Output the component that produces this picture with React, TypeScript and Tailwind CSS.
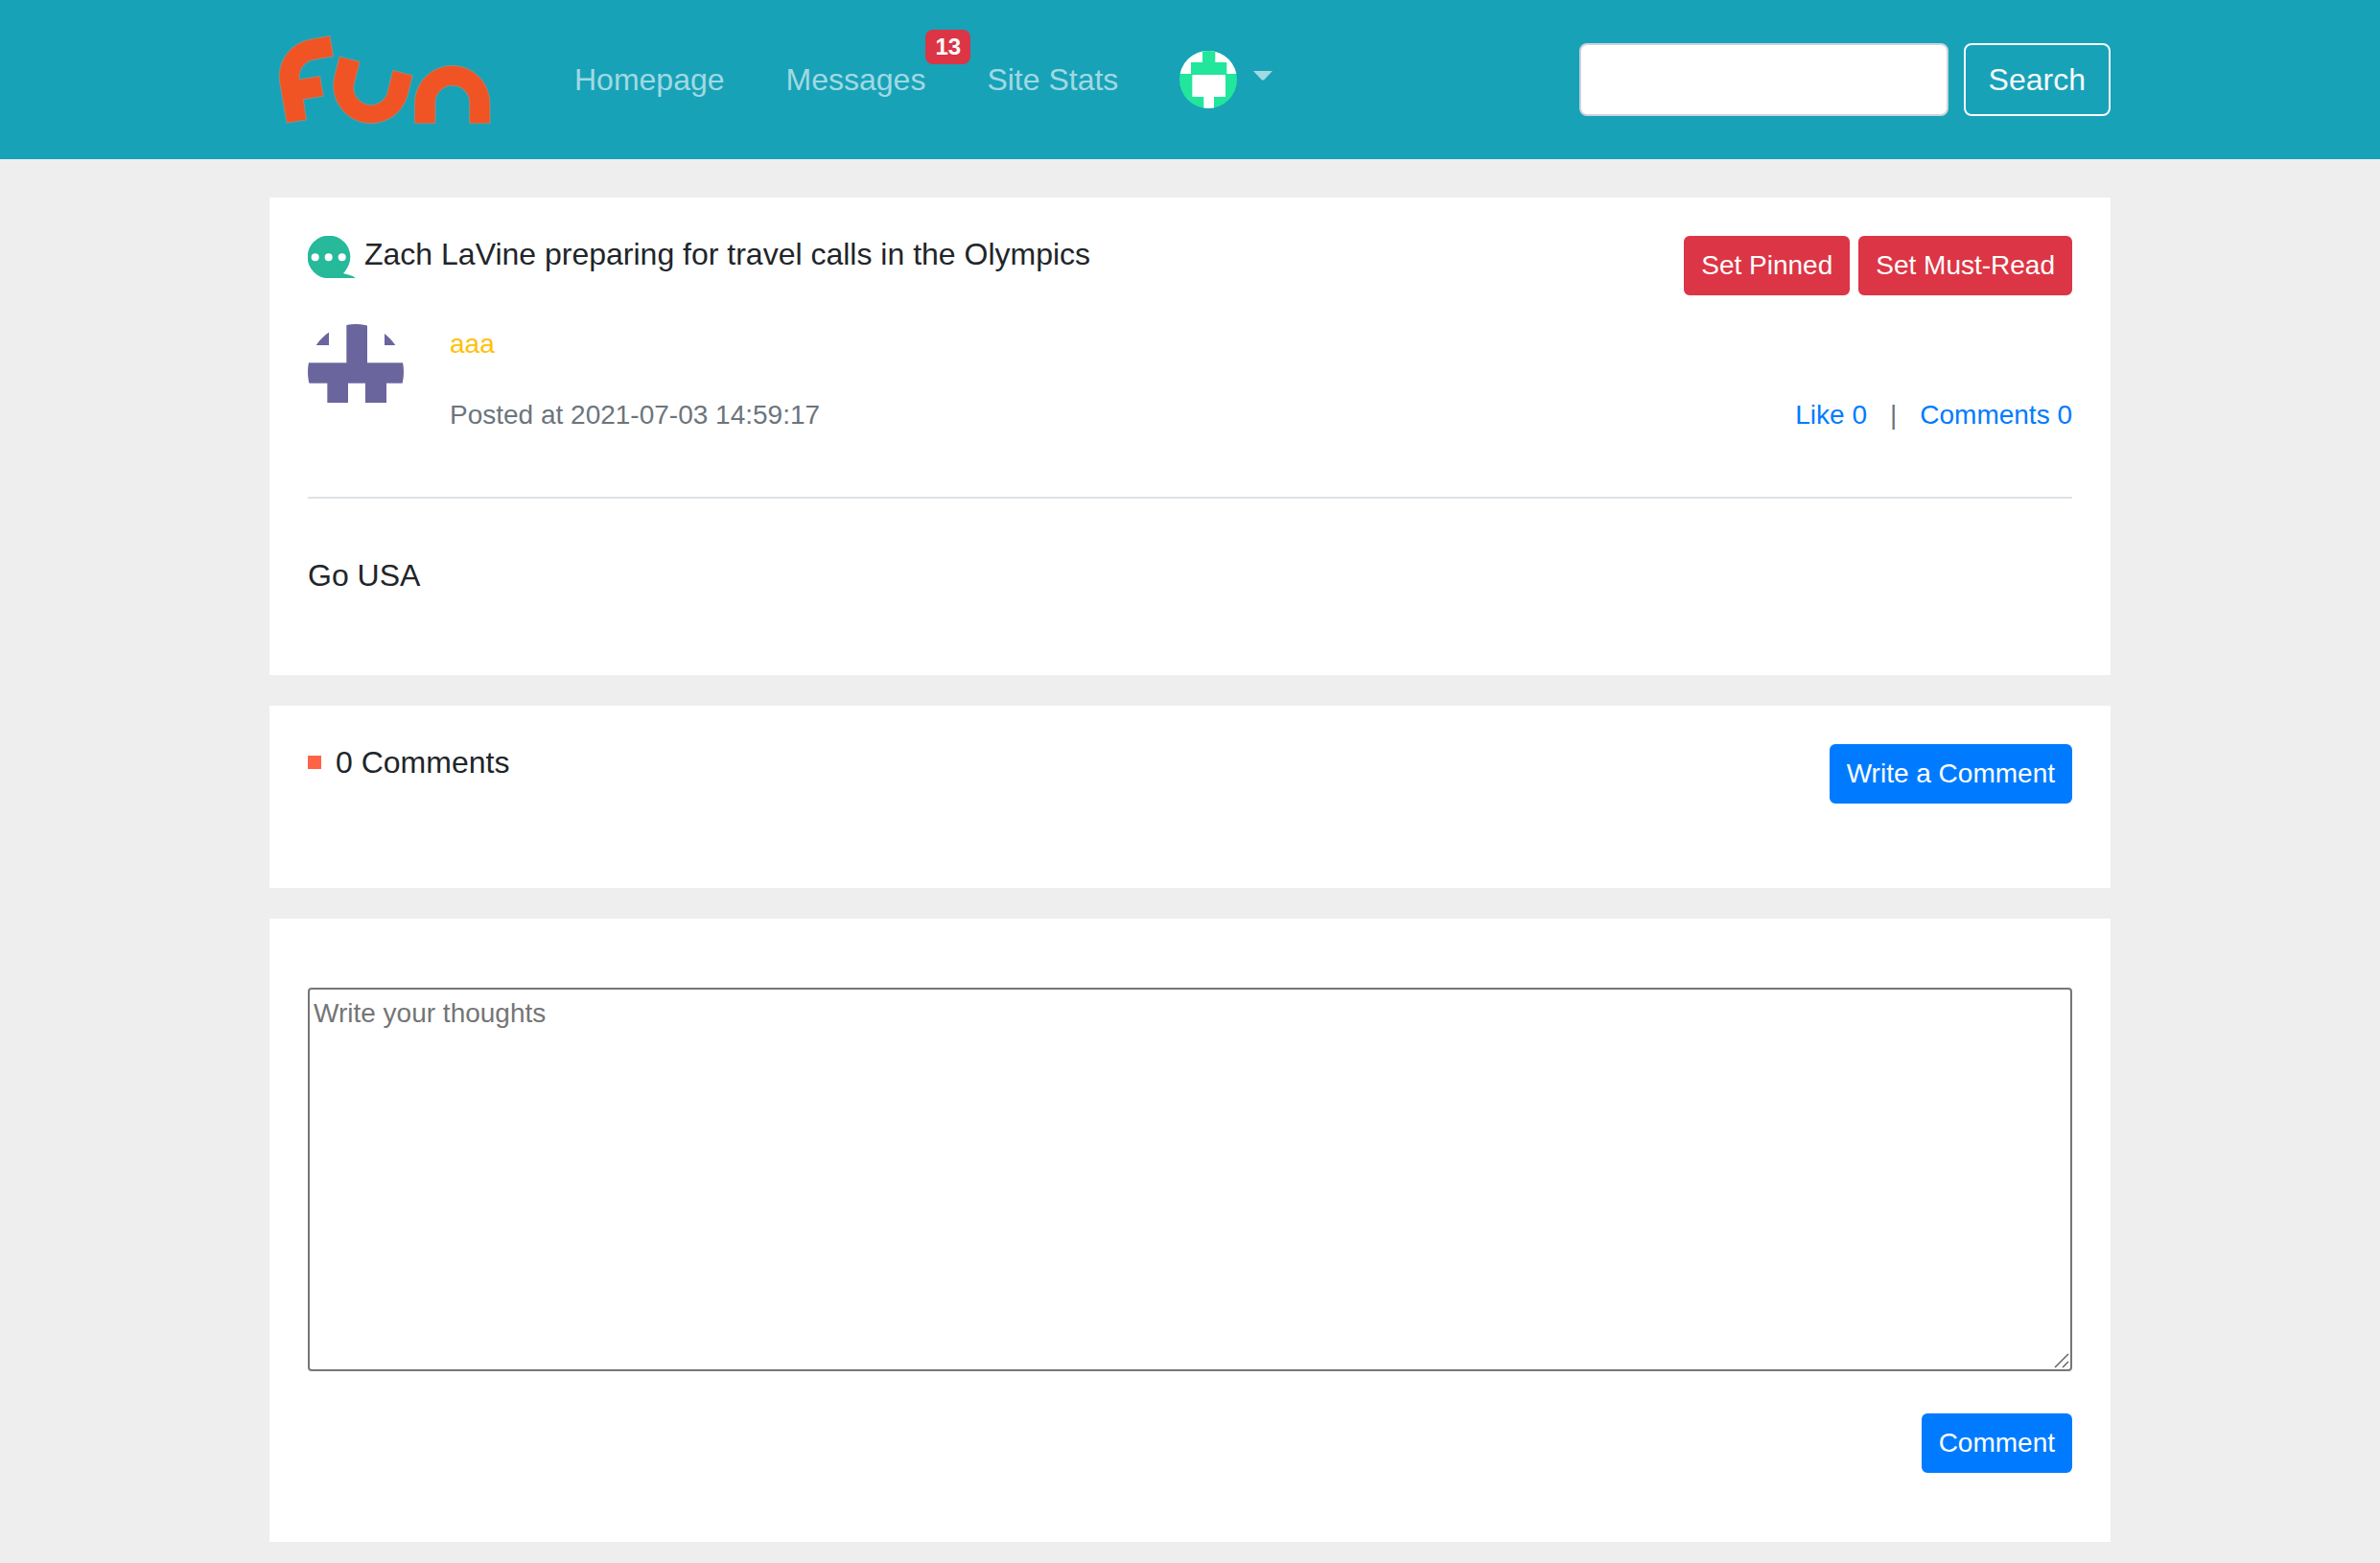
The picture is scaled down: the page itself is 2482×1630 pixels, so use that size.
import React from 'react';

function Logo() {
  return (
    <svg viewBox="33 96 768 306" className="h-[102px] w-[256px]" aria-hidden="true">
      <g fill="#f15424" stroke="#8e9a8c" strokeWidth="2">
        <path d="M222 112 L233 176 L172 187 A54 54 0 0 0 127 248 L191 238 L202 301 L139 311 L149 375 L87 385 L65 258 A118 118 0 0 1 160 123 Z" />
        <path d="M252 177 L316 193 L300 255 A54 54 0 1 0 404 281 L419 220 L481 236 L466 296 A118 118 0 0 1 236 240 Z" />
        <path d="M487 386 V323 A118 118 0 0 1 723 323 V386 H659 V321 A53 53 0 0 0 552 321 V386 Z" />
      </g>
    </svg>
  );
}

function UserAvatar() {
  return (
    <svg viewBox="0 0 180 180" className="size-[60px] rounded-full" aria-hidden="true">
      <rect width="180" height="180" fill="#21e69c" />
      <rect width="180" height="72" fill="#fff" />
      <rect x="72" width="40" height="40" fill="#21e69c" />
      <rect x="36" y="36" width="112" height="39" fill="#21e69c" />
      <rect x="40" y="75" width="104" height="69" fill="#fff" />
      <rect x="76" y="143" width="32" height="37" fill="#fff" />
    </svg>
  );
}

function AuthorAvatar() {
  return (
    <svg viewBox="0 0 300 300" className="size-[100px] shrink-0 rounded-full" fill="#6a659d" aria-hidden="true">
      <rect width="66" height="66" />
      <rect x="240" width="60" height="66" />
      <rect x="121" width="65" height="125" />
      <rect y="121" width="300" height="64" />
      <rect x="61" y="180" width="65" height="66" />
      <rect x="180" y="180" width="66" height="66" />
    </svg>
  );
}

function ChatIcon() {
  return (
    <svg viewBox="0 0 147 132" className="h-[44px] w-[49px] shrink-0" aria-hidden="true">
      <circle cx="66" cy="66" r="67" fill="#26b99a" />
      <path d="M120 106 Q114 114 111 117 Q120 120 130 122 Q142 126 147 130 V132 H66 Z" fill="#26b99a" />
      <circle cx="23" cy="67" r="12" fill="#fff" />
      <circle cx="65" cy="67" r="12" fill="#fff" />
      <circle cx="107" cy="67" r="12" fill="#fff" />
    </svg>
  );
}

function SmallButton({ tone, children }: { tone: 'danger' | 'primary'; children: React.ReactNode }) {
  const color = tone === 'danger' ? 'bg-[#dc3545] border-[#dc3545]' : 'bg-[#007bff] border-[#007bff]';
  return (
    <button
      type="button"
      className={`${color} rounded-md border-2 px-4 py-2 text-[28px] leading-[42px] whitespace-nowrap text-white`}
    >
      {children}
    </button>
  );
}

function Header() {
  return (
    <header className="bg-[#17a2b8] py-8">
      <div className="mx-auto flex max-w-[1920px] items-center justify-between">
        <div className="flex items-center">
          <a href="#" aria-label="fun">
            <Logo />
          </a>
          <nav className="ml-[62px] flex items-center gap-16 text-[32px] leading-[48px] whitespace-nowrap text-white/60">
            <a href="#">Homepage</a>
            <a href="#" className="relative">
              Messages
              <span className="absolute -top-7 left-full rounded-lg bg-[#dc3545] px-[10px] py-1.5 text-2xl leading-6 font-bold text-white">
                13
              </span>
            </a>
            <a href="#">Site Stats</a>
            <button type="button" aria-label="Account menu" className="flex items-center gap-[17px]">
              <UserAvatar />
              <svg viewBox="0 0 20 10" className="mb-2 h-[10px] w-5" fill="currentColor" aria-hidden="true">
                <path d="M0 0 H20 L11 9.4 H9 Z" />
              </svg>
            </button>
          </nav>
        </div>
        <form className="flex gap-4 text-[32px] leading-[48px]">
          <input
            type="search"
            aria-label="Search"
            className="h-[76px] w-[385px] rounded-lg border-2 border-[#ced4da] bg-white px-6 text-[#495057]"
          />
          <button type="button" className="rounded-lg border-2 border-[#f8f9fa] px-6 py-3 text-[#f8f9fa]">
            Search
          </button>
        </form>
      </div>
    </header>
  );
}

export default function App() {
  return (
    <div className="min-h-screen bg-[#eee] font-['Liberation_Sans',Arial,sans-serif] text-[#212529]">
      <Header />
      <main className="mx-auto mt-10 flex max-w-[1920px] flex-col gap-8">
        <article className="bg-white px-10 pt-10 pb-20">
          <div className="flex items-start justify-between">
            <div className="flex items-start gap-2.5">
              <ChatIcon />
              <h1 className="text-[32px] leading-[38px]">Zach LaVine preparing for travel calls in the Olympics</h1>
            </div>
            <div className="flex gap-[9px]">
              <SmallButton tone="danger">Set Pinned</SmallButton>
              <SmallButton tone="danger">Set Must-Read</SmallButton>
            </div>
          </div>
          <div className="mt-[30px] flex gap-12 text-[28px] leading-[42px]">
            <AuthorAvatar />
            <div className="flex grow flex-col gap-8">
              <a href="#" className="self-start text-[#ffc107]">
                aaa
              </a>
              <div className="flex justify-between text-[#6c757d]">
                <span>Posted at 2021-07-03 14:59:17</span>
                <div className="flex gap-6">
                  <a href="#" className="text-[#007bff]">
                    Like 0
                  </a>
                  <span>|</span>
                  <a href="#comments" className="text-[#007bff]">
                    Comments 0
                  </a>
                </div>
              </div>
            </div>
          </div>
          <hr className="mt-16 border-t-2 border-[#dee2e6]" />
          <p className="mt-14 text-[32px] leading-[48px]">Go USA</p>
        </article>

        <section id="comments" className="flex items-start justify-between bg-white px-10 pt-10 pb-[88px]">
          <h2 className="flex items-center gap-[15px] text-[32px] leading-[38px]">
            <span className="size-3.5 bg-[#ff6347]" />0 Comments
          </h2>
          <SmallButton tone="primary">Write a Comment</SmallButton>
        </section>

        <form className="bg-white px-10 py-[72px]">
          <div className="relative">
            <textarea
              aria-label="Write your thoughts"
              placeholder="Write your thoughts"
              className="block h-[400px] w-full resize-none rounded border-2 border-[#767676] bg-white p-1 text-[28px] leading-[42px] placeholder:text-[#757575]"
            />
            <svg
              viewBox="0 0 16 16"
              className="pointer-events-none absolute right-[3px] bottom-[3px] size-4"
              stroke="#5a5a5a"
              strokeWidth="1.4"
              aria-hidden="true"
            >
              <path d="M1 15 L15 1 M9 15 L15 9" />
            </svg>
          </div>
          <div className="mt-11 flex justify-end">
            <SmallButton tone="primary">Comment</SmallButton>
          </div>
        </form>
      </main>
    </div>
  );
}
